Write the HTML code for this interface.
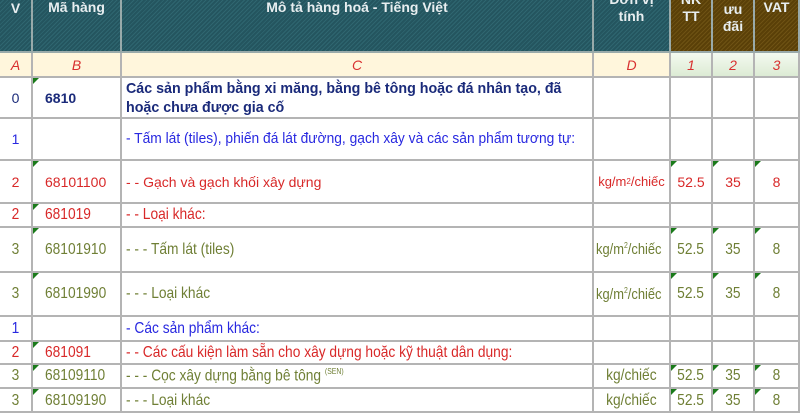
<!DOCTYPE html>
<html><head><meta charset="utf-8"><style>
body{margin:0;width:800px;height:400px;overflow:hidden;background:#fff;font-family:"Liberation Sans",Arial,sans-serif;position:relative}
.c{position:absolute;box-sizing:border-box;border-right:2px solid #b4b4b4;border-bottom:2px solid #b4b4b4;display:flex;align-items:center;font-size:13px;white-space:nowrap;overflow:hidden}
.h{background:repeating-linear-gradient(135deg,#24555f 0 2px,#2f6670 2px 3px);color:#e8eef0;font-weight:bold;justify-content:center;text-align:center;font-size:14px;line-height:17px;align-items:flex-start;border-color:#9aa}
.g{background:repeating-linear-gradient(135deg,#5a4008 0 2px,#6e5214 2px 3px)}
.l{background:#fff6dc;color:#d83030;font-style:italic;justify-content:center;font-size:14px}
.lg{background:linear-gradient(#f4faf0,#dcebd4)}
.ctr{justify-content:center}
.pl{padding-left:4px}
.tri:before{content:"";position:absolute;left:0;top:0;border-top:6px solid #1a7a1a;border-right:6px solid transparent}
.n{transform:scaleX(.86);transform-origin:left center;display:inline-block;font-size:16px}
.ctr .n{transform-origin:center center}
.b0{color:#1a2a7a;font-weight:bold;font-size:14px}
.b1{color:#2828e0}
.b2{color:#d82828}
.b3{color:#6f7f35}
sup{font-size:8px}
</style></head><body>
<div class="c h" style="left:0;top:0;width:33px;height:53px">V</div>
<div class="c h" style="left:33px;top:0;width:89px;height:53px;line-height:14px">Mã hàng</div>
<div class="c h" style="left:122px;top:0;width:472px;height:53px;line-height:14px">Mô tả hàng hoá - Tiếng Việt</div>
<div class="c h" style="left:594px;top:0;width:77px;height:53px"><div style="margin-top:-9px">Đơn vị<br>tính</div></div>
<div class="c h g" style="left:671px;top:0;width:42px;height:53px"><div style="margin-top:-9px">NK<br>TT</div></div>
<div class="c h g" style="left:713px;top:0;width:42px;height:53px"><div style="margin-top:-16px;line-height:17px">NK<br>ưu<br>đãi</div></div>
<div class="c h g" style="left:755px;top:0;width:45px;height:53px;line-height:14px">VAT</div>

<div class="c l" style="left:0;top:53px;width:33px;height:25px">A</div>
<div class="c l" style="left:33px;top:53px;width:89px;height:25px">B</div>
<div class="c l" style="left:122px;top:53px;width:472px;height:25px">C</div>
<div class="c l" style="left:594px;top:53px;width:77px;height:25px">D</div>
<div class="c l lg" style="left:671px;top:53px;width:42px;height:25px">1</div>
<div class="c l lg" style="left:713px;top:53px;width:42px;height:25px">2</div>
<div class="c l lg" style="left:755px;top:53px;width:45px;height:25px">3</div>

<!-- row 0 -->
<div class="c ctr b1" style="left:0;top:78px;width:33px;height:41px;color:#1a2a7a;font-size:14px">0</div>
<div class="c tri b0" style="left:33px;top:78px;width:89px;height:41px;padding-left:12px">6810</div>
<div class="c b0" style="left:122px;top:78px;width:472px;height:41px;padding-left:4px;align-items:flex-start;padding-top:1px"><div style="transform:scaleX(.95);transform-origin:left top;line-height:19px;font-size:15px">Các sản phẩm bằng xi măng, bằng bê tông hoặc đá nhân tạo, đã<br>hoặc chưa được gia cố</div></div>
<div class="c" style="left:594px;top:78px;width:77px;height:41px"></div>
<div class="c" style="left:671px;top:78px;width:42px;height:41px"></div>
<div class="c" style="left:713px;top:78px;width:42px;height:41px"></div>
<div class="c" style="left:755px;top:78px;width:45px;height:41px"></div>

<!-- row 1 -->
<div class="c ctr b1" style="left:0;top:119px;width:33px;height:42px;font-size:14px">1</div>
<div class="c" style="left:33px;top:119px;width:89px;height:42px"></div>
<div class="c b1 pl" style="left:122px;top:119px;width:472px;height:42px;align-items:flex-start;padding-top:11px"><span style="display:inline-block;transform:scaleX(.92);transform-origin:left center;font-size:15px">- Tấm lát (tiles), phiến đá lát đường, gạch xây và các sản phẩm tương tự:</span></div>
<div class="c" style="left:594px;top:119px;width:77px;height:42px"></div>
<div class="c" style="left:671px;top:119px;width:42px;height:42px"></div>
<div class="c" style="left:713px;top:119px;width:42px;height:42px"></div>
<div class="c" style="left:755px;top:119px;width:45px;height:42px"></div>

<!-- row 2 -->
<div class="c ctr b2" style="left:0;top:161px;width:33px;height:43px;font-size:14px">2</div>
<div class="c tri b2" style="left:33px;top:161px;width:89px;height:43px;padding-left:12px;font-size:14px">68101100</div>
<div class="c b2 pl" style="left:122px;top:161px;width:472px;height:43px;font-size:14px">- - Gạch và gạch khối xây dựng</div>
<div class="c b2 ctr" style="left:594px;top:161px;width:77px;height:43px">kg/m<sup>2</sup>/chiếc</div>
<div class="c tri b2 ctr" style="left:671px;top:161px;width:42px;height:43px;font-size:14px">52.5</div>
<div class="c tri b2 ctr" style="left:713px;top:161px;width:42px;height:43px;font-size:14px">35</div>
<div class="c tri b2 ctr" style="left:755px;top:161px;width:45px;height:43px;font-size:14px">8</div>

<!-- row 681019 -->
<div class="c ctr b2" style="left:0;top:204px;width:33px;height:24px"><span class="n">2</span></div>
<div class="c tri b2" style="left:33px;top:204px;width:89px;height:24px;padding-left:12px"><span class="n">681019</span></div>
<div class="c b2 pl" style="left:122px;top:204px;width:472px;height:24px"><span class="n">- - Loại khác:</span></div>
<div class="c" style="left:594px;top:204px;width:77px;height:24px"></div>
<div class="c" style="left:671px;top:204px;width:42px;height:24px"></div>
<div class="c" style="left:713px;top:204px;width:42px;height:24px"></div>
<div class="c" style="left:755px;top:204px;width:45px;height:24px"></div>

<!-- 68101910 -->
<div class="c ctr b3" style="left:0;top:228px;width:33px;height:45px"><span class="n">3</span></div>
<div class="c tri b3" style="left:33px;top:228px;width:89px;height:45px;padding-left:12px"><span class="n">68101910</span></div>
<div class="c b3 pl" style="left:122px;top:228px;width:472px;height:45px"><span class="n">- - - Tấm lát (tiles)</span></div>
<div class="c b3" style="left:594px;top:228px;width:77px;height:45px;padding-left:2px"><span class="n" style="font-size:15px">kg/m<sup>2</sup>/chiếc</span></div>
<div class="c tri b3 ctr" style="left:671px;top:228px;width:42px;height:45px"><span class="n">52.5</span></div>
<div class="c tri b3 ctr" style="left:713px;top:228px;width:42px;height:45px"><span class="n">35</span></div>
<div class="c tri b3 ctr" style="left:755px;top:228px;width:45px;height:45px"><span class="n">8</span></div>

<!-- 68101990 -->
<div class="c ctr b3" style="left:0;top:273px;width:33px;height:44px"><span class="n">3</span></div>
<div class="c tri b3" style="left:33px;top:273px;width:89px;height:44px;padding-left:12px"><span class="n">68101990</span></div>
<div class="c b3 pl" style="left:122px;top:273px;width:472px;height:44px"><span class="n">- - - Loại khác</span></div>
<div class="c b3" style="left:594px;top:273px;width:77px;height:44px;padding-left:2px"><span class="n" style="font-size:15px">kg/m<sup>2</sup>/chiếc</span></div>
<div class="c tri b3 ctr" style="left:671px;top:273px;width:42px;height:44px"><span class="n">52.5</span></div>
<div class="c tri b3 ctr" style="left:713px;top:273px;width:42px;height:44px"><span class="n">35</span></div>
<div class="c tri b3 ctr" style="left:755px;top:273px;width:45px;height:44px"><span class="n">8</span></div>

<!-- Các sản phẩm khác -->
<div class="c ctr b1" style="left:0;top:317px;width:33px;height:25px"><span class="n">1</span></div>
<div class="c" style="left:33px;top:317px;width:89px;height:25px"></div>
<div class="c b1 pl" style="left:122px;top:317px;width:472px;height:25px"><span class="n">- Các sản phẩm khác:</span></div>
<div class="c" style="left:594px;top:317px;width:77px;height:25px"></div>
<div class="c" style="left:671px;top:317px;width:42px;height:25px"></div>
<div class="c" style="left:713px;top:317px;width:42px;height:25px"></div>
<div class="c" style="left:755px;top:317px;width:45px;height:25px"></div>

<!-- 681091 -->
<div class="c ctr b2" style="left:0;top:342px;width:33px;height:23px"><span class="n">2</span></div>
<div class="c tri b2" style="left:33px;top:342px;width:89px;height:23px;padding-left:12px"><span class="n">681091</span></div>
<div class="c b2 pl" style="left:122px;top:342px;width:472px;height:23px"><span class="n">- - Các cấu kiện làm sẵn cho xây dựng hoặc kỹ thuật dân dụng:</span></div>
<div class="c" style="left:594px;top:342px;width:77px;height:23px"></div>
<div class="c" style="left:671px;top:342px;width:42px;height:23px"></div>
<div class="c" style="left:713px;top:342px;width:42px;height:23px"></div>
<div class="c" style="left:755px;top:342px;width:45px;height:23px"></div>

<!-- 68109110 -->
<div class="c ctr b3" style="left:0;top:365px;width:33px;height:24px"><span class="n">3</span></div>
<div class="c tri b3" style="left:33px;top:365px;width:89px;height:24px;padding-left:12px"><span class="n">68109110</span></div>
<div class="c b3 pl" style="left:122px;top:365px;width:472px;height:24px"><span class="n">- - - Cọc xây dựng bằng bê tông <sup>(SEN)</sup></span></div>
<div class="c b3 ctr" style="left:594px;top:365px;width:77px;height:24px"><span class="n">kg/chiếc</span></div>
<div class="c tri b3 ctr" style="left:671px;top:365px;width:42px;height:24px"><span class="n">52.5</span></div>
<div class="c tri b3 ctr" style="left:713px;top:365px;width:42px;height:24px"><span class="n">35</span></div>
<div class="c tri b3 ctr" style="left:755px;top:365px;width:45px;height:24px"><span class="n">8</span></div>

<!-- partial -->
<div class="c ctr b3" style="left:0;top:389px;width:33px;height:24px;align-items:flex-start;padding-top:3px"><span class="n">3</span></div>
<div class="c tri b3" style="left:33px;top:389px;width:89px;height:24px;padding-left:12px;align-items:flex-start;padding-top:3px"><span class="n">68109190</span></div>
<div class="c b3 pl" style="left:122px;top:389px;width:472px;height:24px;align-items:flex-start;padding-top:3px"><span class="n">- - - Loại khác</span></div>
<div class="c b3 ctr" style="left:594px;top:389px;width:77px;height:24px;align-items:flex-start;padding-top:3px"><span class="n">kg/chiếc</span></div>
<div class="c tri b3 ctr" style="left:671px;top:389px;width:42px;height:24px;align-items:flex-start;padding-top:3px"><span class="n">52.5</span></div>
<div class="c tri b3 ctr" style="left:713px;top:389px;width:42px;height:24px;align-items:flex-start;padding-top:3px"><span class="n">35</span></div>
<div class="c tri b3 ctr" style="left:755px;top:389px;width:45px;height:24px;align-items:flex-start;padding-top:3px"><span class="n">8</span></div>
</body></html>
